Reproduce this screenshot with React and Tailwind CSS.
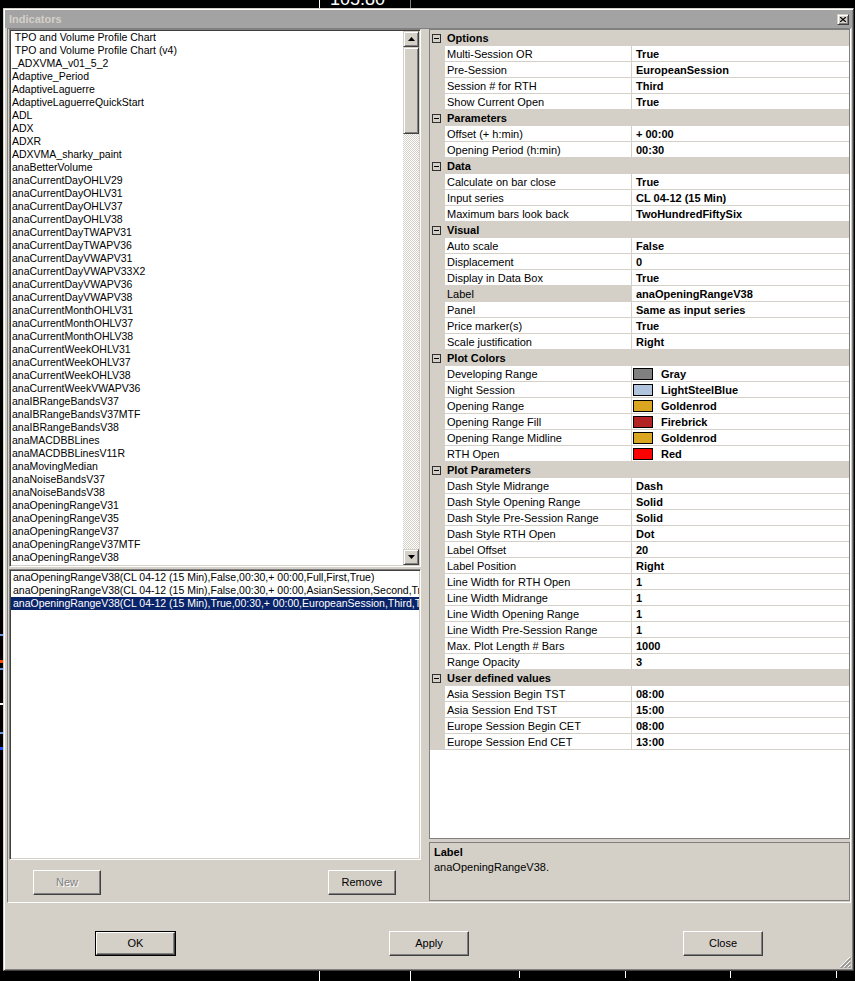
import React from "react";

const indicators = [
  " TPO and Volume Profile Chart",
  " TPO and Volume Profile Chart (v4)",
  "_ADXVMA_v01_5_2",
  "Adaptive_Period",
  "AdaptiveLaguerre",
  "AdaptiveLaguerreQuickStart",
  "ADL",
  "ADX",
  "ADXR",
  "ADXVMA_sharky_paint",
  "anaBetterVolume",
  "anaCurrentDayOHLV29",
  "anaCurrentDayOHLV31",
  "anaCurrentDayOHLV37",
  "anaCurrentDayOHLV38",
  "anaCurrentDayTWAPV31",
  "anaCurrentDayTWAPV36",
  "anaCurrentDayVWAPV31",
  "anaCurrentDayVWAPV33X2",
  "anaCurrentDayVWAPV36",
  "anaCurrentDayVWAPV38",
  "anaCurrentMonthOHLV31",
  "anaCurrentMonthOHLV37",
  "anaCurrentMonthOHLV38",
  "anaCurrentWeekOHLV31",
  "anaCurrentWeekOHLV37",
  "anaCurrentWeekOHLV38",
  "anaCurrentWeekVWAPV36",
  "anaIBRangeBandsV37",
  "anaIBRangeBandsV37MTF",
  "anaIBRangeBandsV38",
  "anaMACDBBLines",
  "anaMACDBBLinesV11R",
  "anaMovingMedian",
  "anaNoiseBandsV37",
  "anaNoiseBandsV38",
  "anaOpeningRangeV31",
  "anaOpeningRangeV35",
  "anaOpeningRangeV37",
  "anaOpeningRangeV37MTF",
  "anaOpeningRangeV38",
];

const instances = [
  "anaOpeningRangeV38(CL 04-12 (15 Min),False,00:30,+ 00:00,Full,First,True)",
  "anaOpeningRangeV38(CL 04-12 (15 Min),False,00:30,+ 00:00,AsianSession,Second,True)",
  "anaOpeningRangeV38(CL 04-12 (15 Min),True,00:30,+ 00:00,EuropeanSession,Third,True)",
];

const sections = [
  {
    title: "Options",
    rows: [
      ["Multi-Session OR", "True"],
      ["Pre-Session", "EuropeanSession"],
      ["Session # for RTH", "Third"],
      ["Show Current Open", "True"],
    ],
  },
  {
    title: "Parameters",
    rows: [
      ["Offset (+ h:min)", "+ 00:00"],
      ["Opening Period (h:min)", "00:30"],
    ],
  },
  {
    title: "Data",
    rows: [
      ["Calculate on bar close", "True"],
      ["Input series", "CL 04-12 (15 Min)"],
      ["Maximum bars look back", "TwoHundredFiftySix"],
    ],
  },
  {
    title: "Visual",
    rows: [
      ["Auto scale", "False"],
      ["Displacement", "0"],
      ["Display in Data Box", "True"],
      ["Label", "anaOpeningRangeV38", true],
      ["Panel", "Same as input series"],
      ["Price marker(s)", "True"],
      ["Scale justification", "Right"],
    ],
  },
  {
    title: "Plot Colors",
    swatches: true,
    rows: [
      ["Developing Range", "Gray", "bg-[#808080]"],
      ["Night Session", "LightSteelBlue", "bg-[#b0c4de]"],
      ["Opening Range", "Goldenrod", "bg-[#daa520]"],
      ["Opening Range Fill", "Firebrick", "bg-[#b22222]"],
      ["Opening Range Midline", "Goldenrod", "bg-[#daa520]"],
      ["RTH Open", "Red", "bg-[#ff0000]"],
    ],
  },
  {
    title: "Plot Parameters",
    rows: [
      ["Dash Style Midrange", "Dash"],
      ["Dash Style Opening Range", "Solid"],
      ["Dash Style Pre-Session Range", "Solid"],
      ["Dash Style RTH Open", "Dot"],
      ["Label Offset", "20"],
      ["Label Position", "Right"],
      ["Line Width for RTH Open", "1"],
      ["Line Width Midrange", "1"],
      ["Line Width Opening Range", "1"],
      ["Line Width Pre-Session Range", "1"],
      ["Max. Plot Length # Bars", "1000"],
      ["Range Opacity", "3"],
    ],
  },
  {
    title: "User defined values",
    rows: [
      ["Asia Session Begin TST", "08:00"],
      ["Asia Session End TST", "15:00"],
      ["Europe Session Begin CET", "08:00"],
      ["Europe Session End CET", "13:00"],
    ],
  },
];

// classic 3D edges
const raised =
  "border border-t-[#d4d0c8] border-l-[#d4d0c8] border-r-[#404040] border-b-[#404040] shadow-[inset_1px_1px_0_#fff,inset_-1px_-1px_0_#808080]";
const sunken =
  "border border-t-[#808080] border-l-[#808080] border-r-white border-b-white shadow-[inset_1px_1px_0_#404040,inset_-1px_-1px_0_#d4d0c8]";

const Arrow = ({ down }) => (
  <svg width="7" height="4" viewBox="0 0 7 4">
    {down ? <path d="M0 0h7L3.5 4z" fill="#000" /> : <path d="M0 4h7L3.5 0z" fill="#000" />}
  </svg>
);

const Button = ({ children, width, disabled, isDefault }) => (
  <div className={`h-[25px] ${width} ${isDefault ? "border border-black" : ""}`}>
    <div
      className={`h-full flex items-center justify-center border border-t-white border-l-white border-r-[#404040] border-b-[#404040] shadow-[inset_-1px_-1px_0_#808080] ${
        disabled ? "text-[#808080] [text-shadow:1px_1px_0_#fff]" : "text-black"
      }`}
    >
      {children}
    </div>
  </div>
);

const Category = ({ title }) => (
  <div className="flex items-center h-[16px] bg-[#d4d0c8]">
    <div className="ml-[2px] w-[9px] h-[9px] border border-[#303030] flex items-center justify-center">
      <div className="w-[5px] h-px bg-black" />
    </div>
    <span className="ml-[6px] pt-[1px] font-bold leading-[15px]">{title}</span>
  </div>
);

const PropRow = ({ name, value, swatch, selected }) => (
  <div className="flex h-[16px]">
    <div className="w-[15px] shrink-0 bg-[#d4d0c8]" />
    <div
      className={`w-[186px] shrink-0 border-b border-[#d4d0c8] pl-[2px] pt-[1px] leading-[14px] whitespace-nowrap overflow-hidden ${
        selected ? "bg-[#d4d0c8]" : "bg-white"
      }`}
    >
      {name}
    </div>
    <div className="w-px shrink-0 bg-[#d4d0c8]" />
    <div className="flex-1 flex items-center border-b border-[#d4d0c8] bg-white font-bold whitespace-nowrap">
      {swatch ? (
        <>
          <div className={`ml-[1px] w-[20px] h-[12px] border border-black ${swatch}`} />
          <span className="ml-[8px] pt-[1px] leading-[14px]">{value}</span>
        </>
      ) : (
        <span className="ml-[4px] pt-[1px] leading-[14px]">{value}</span>
      )}
    </div>
  </div>
);

export default function App() {
  return (
    <div className="w-[855px] h-[981px] bg-black flex flex-col overflow-hidden font-['Liberation_Sans',Arial,sans-serif] text-[11px] text-black">
      {/* chart price box peeking above the dialog */}
      <div className="h-[8px] flex shrink-0">
        <div className="w-[319px]" />
        <div className="w-[92px] border-l border-white border-r border-r-[#808080] overflow-hidden">
          <div className="mt-[-10px] pl-[10px] text-[18px] leading-[18px] text-white">105.80</div>
        </div>
      </div>

      <div className="flex h-[963px] shrink-0">
        {/* chart bits on the left edge */}
        <div className="w-[3px] flex flex-col">
          <div className="mt-[626px] h-[2px] bg-[#6495ed]" />
          <div className="mt-[24px] h-[3px] bg-[#ff4500]" />
          <div className="mt-[5px] h-[2px] bg-[#6495ed]" />
          <div className="mt-[33px] h-[2px] bg-white" />
          <div className="mt-[27px] h-[2px] bg-[#6495ed]" />
          <div className="mt-[13px] h-[3px] bg-[#1e50ff]" />
        </div>

        {/* dialog */}
        <div className="w-[851px] flex flex-col bg-[#d4d0c8] p-[1px] border border-t-[#d4d0c8] border-l-[#d4d0c8] border-r-[#404040] border-b-[#404040] shadow-[inset_1px_1px_0_#fff,inset_-1px_-1px_0_#808080]">
          {/* title bar */}
          <div className="h-[18px] shrink-0 flex items-center bg-[#a3a3a3]">
            <span className="ml-[4px] font-bold text-[#d4d0c8]">Indicators</span>
            <div className={`ml-auto mr-[3px] w-[12px] h-[11px] flex items-center justify-center bg-[#d4d0c8] ${raised}`}>
              <svg width="6" height="5" viewBox="0 0 6 5">
                <path d="M0 0L6 5M6 0L0 5" stroke="#000" strokeWidth="1.2" />
              </svg>
            </div>
          </div>

          {/* main panel */}
          <div className="ml-[2px] mr-[1px] h-[875px] shrink-0 flex border border-t-[#808080] border-l-[#808080] border-r-white border-b-white">
            {/* left column */}
            <div className="w-[413px] shrink-0 flex flex-col pl-[1px] text-[10.5px]">
              {/* indicator list */}
              <div className={`h-[538px] flex bg-white p-[1px] ${sunken}`}>
                <div className="flex-1 overflow-hidden">
                  {indicators.map((name, i) => (
                    <div key={i} className="h-[13px] leading-[13px] pl-[1px] whitespace-pre">
                      {name}
                    </div>
                  ))}
                </div>
                <div className="w-[16px] flex flex-col">
                  <div className={`h-[16px] bg-[#d4d0c8] flex items-center justify-center ${raised}`}>
                    <Arrow />
                  </div>
                  <div className={`h-[87px] bg-[#d4d0c8] ${raised}`} />
                  <div className="flex-1 bg-[repeating-conic-gradient(#d4d0c8_0%_25%,#ffffff_0%_50%)] bg-[length:2px_2px]" />
                  <div className={`h-[16px] bg-[#d4d0c8] flex items-center justify-center ${raised}`}>
                    <Arrow down />
                  </div>
                </div>
              </div>

              {/* configured instances */}
              <div className={`mt-[2px] h-[291px] bg-white p-[1px] overflow-hidden ${sunken}`}>
                {instances.map((text, i) => (
                  <div
                    key={i}
                    className={`h-[13px] leading-[13px] pl-[2px] whitespace-nowrap overflow-hidden ${
                      i === 2 ? "bg-[#0a246a] text-white" : ""
                    }`}
                  >
                    {text}
                  </div>
                ))}
              </div>

              <div className="mt-[10px] flex justify-between pl-[24px] pr-[25px] text-[11px]">
                <Button width="w-[68px]" disabled>
                  New
                </Button>
                <Button width="w-[68px]">Remove</Button>
              </div>
            </div>

            <div className="w-[8px] shrink-0" />

            {/* right column: property grid */}
            <div className="w-[421px] shrink-0 flex flex-col">
              <div className="h-[810px] border border-[#808080] bg-white overflow-hidden">
                {sections.map((sec) => (
                  <div key={sec.title}>
                    <Category title={sec.title} />
                    {sec.rows.map(([name, value, extra]) => (
                      <PropRow
                        key={name}
                        name={name}
                        value={value}
                        swatch={sec.swatches ? extra : null}
                        selected={!sec.swatches && extra === true}
                      />
                    ))}
                  </div>
                ))}
              </div>
              <div className="mt-[3px] h-[59px] border border-[#808080] bg-[#d4d0c8] pl-[4px] pt-[2px]">
                <div className="font-bold leading-[15px]">Label</div>
                <div className="leading-[15px]">anaOpeningRangeV38.</div>
              </div>
            </div>
          </div>

          {/* dialog buttons */}
          <div className="relative flex-1 flex pt-[28px] pl-[90px]">
            <Button width="w-[81px]" isDefault>
              OK
            </Button>
            <div className="ml-[213px]">
              <Button width="w-[80px]">Apply</Button>
            </div>
            <div className="ml-[214px]">
              <Button width="w-[80px]">Close</Button>
            </div>
            <svg className="absolute right-[1px] bottom-[1px]" width="12" height="12" viewBox="0 0 12 12">
              <path d="M11 1L1 11M11 5L5 11M11 9L9 11" stroke="#ffffff" strokeWidth="1" />
              <path d="M12 1.5L1.5 12M12 2.5L2.5 12M12 5.5L5.5 12M12 6.5L6.5 12M12 9.5L9.5 12M12 10.5L10.5 12" stroke="#808080" strokeWidth="1" />
            </svg>
          </div>
        </div>
        <div className="w-[1px]" />
      </div>

      {/* chart time axis ticks below */}
      <div className="h-[10px] flex shrink-0">
        <div className="ml-[319px] w-px h-full bg-white" />
        <div className="ml-[90px] w-px h-full bg-white" />
        <div className="ml-[108px] w-px h-[7px] bg-white" />
        <div className="ml-[105px] w-px h-[7px] bg-white" />
        <div className="ml-[104px] w-px h-[7px] bg-white" />
        <div className="ml-[105px] w-px h-[7px] bg-white" />
      </div>
    </div>
  );
}
